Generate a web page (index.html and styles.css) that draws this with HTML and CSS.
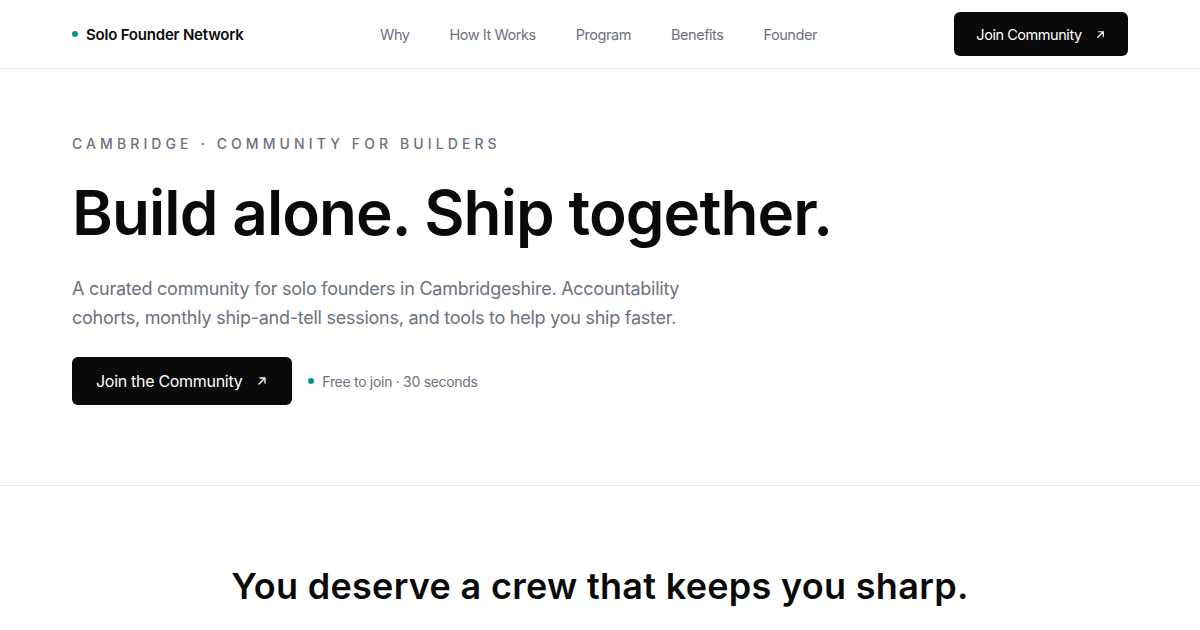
FILE: index.html
```html
<!DOCTYPE html>
<html lang="en">
<head>
<meta charset="utf-8">
<title>Solo Founder Network</title>
<link rel="stylesheet" href="styles.css">
</head>
<body>
<header class="site-header">
  <div class="container header-inner">
    <a class="brand" href="#"><span class="dot"></span>Solo Founder Network</a>
    <nav class="nav">
      <a href="#">Why</a>
      <a href="#">How It Works</a>
      <a href="#">Program</a>
      <a href="#">Benefits</a>
      <a href="#">Founder</a>
    </nav>
    <div class="header-actions">
      <a class="btn btn-sm" href="#">Join Community
        <svg class="arrow" viewBox="0 0 12 12" width="11" height="11"><path d="M3 9 L9 3 M4 3 H9 V8" fill="none" stroke="currentColor" stroke-width="1.3" stroke-linecap="round" stroke-linejoin="round"/></svg>
      </a>
    </div>
  </div>
</header>

<section class="hero">
  <div class="container">
    <p class="eyebrow">Cambridge · Community for Builders</p>
    <h1 class="headline">Build alone. Ship together.</h1>
    <p class="lead">A curated community for solo founders in Cambridgeshire. Accountability cohorts, monthly ship-and-tell sessions, and tools to help you ship faster.</p>
    <div class="cta-row">
      <a class="btn btn-lg" href="#">Join the Community
        <svg class="arrow" viewBox="0 0 12 12" width="12" height="12"><path d="M3 9 L9 3 M4 3 H9 V8" fill="none" stroke="currentColor" stroke-width="1.3" stroke-linecap="round" stroke-linejoin="round"/></svg>
      </a>
      <span class="note"><span class="dot"></span>Free to join · 30 seconds</span>
    </div>
  </div>
</section>

<section class="why">
  <div class="container">
    <h2 class="section-title">You deserve a crew that keeps you sharp.</h2>
  </div>
</section>
</body>
</html>
```

FILE: styles.css
```css
* { box-sizing: border-box; }
html, body { margin: 0; padding: 0; }
body {
  font-family: Inter, "Noto Sans", sans-serif;
  background: #ffffff;
  color: #0a0a0a;
  -webkit-font-smoothing: antialiased;
}
a { color: inherit; text-decoration: none; }

.container {
  width: 1056px;
  margin: 0 auto;
}

.site-header {
  border-bottom: 1px solid #e5e7eb;
}
.header-inner {
  height: 68px;
  display: grid;
  grid-template-columns: 1fr auto 1fr;
  align-items: center;
}
.brand {
  display: flex;
  align-items: center;
  gap: 8px;
  font-size: 15px;
  font-weight: 600;
  letter-spacing: -0.2px;
  color: #0a0a0a;
}
.dot {
  display: inline-block;
  width: 6px;
  height: 6px;
  border-radius: 50%;
  background: #0d9488;
}
.nav {
  display: flex;
  gap: 40px;
  font-size: 14.5px;
  color: #6b7280;
  letter-spacing: -0.45px;
  margin-right: 3px;
}
.header-actions {
  display: flex;
  justify-content: flex-end;
}
.btn {
  display: inline-flex;
  align-items: center;
  background: #0a0a0a;
  color: #fff;
  border-radius: 6px;
  letter-spacing: -0.3px;
}
.btn-sm {
  height: 44px;
  width: 174px;
  justify-content: center;
  gap: 13px;
  font-size: 14.5px;
  letter-spacing: -0.45px;
}
.btn-lg {
  height: 48px;
  padding: 0 24px;
  gap: 14px;
  font-size: 16px;
}
.arrow { display: block; }

.hero {
  padding: 65px 0 80px;
  border-bottom: 1px solid #e5e7eb;
}
.eyebrow {
  margin: 0;
  font-size: 14px;
  font-weight: 500;
  letter-spacing: 4.1px;
  text-transform: uppercase;
  color: #6b7280;
  line-height: 20px;
}
.headline {
  margin: 24px 0 0;
  font-size: 62px;
  font-weight: 600;
  letter-spacing: -0.9px;
  line-height: 70px;
  color: #0a0a0a;
}
.lead {
  margin: 26px 0 0;
  max-width: 630px;
  font-size: 18px;
  line-height: 29px;
  color: #6b7280;
  letter-spacing: -0.25px;
}
.cta-row {
  margin-top: 25px;
  display: flex;
  align-items: center;
  gap: 16px;
}
.note {
  display: inline-flex;
  align-items: center;
  gap: 8px;
  font-size: 14px;
  color: #6b7280;
  letter-spacing: -0.3px;
}

.why {
  padding: 78px 0 40px;
}
.section-title {
  margin: 0;
  text-align: center;
  font-size: 36px;
  font-weight: 600;
  letter-spacing: 0.3px;
  line-height: 44px;
}
```
